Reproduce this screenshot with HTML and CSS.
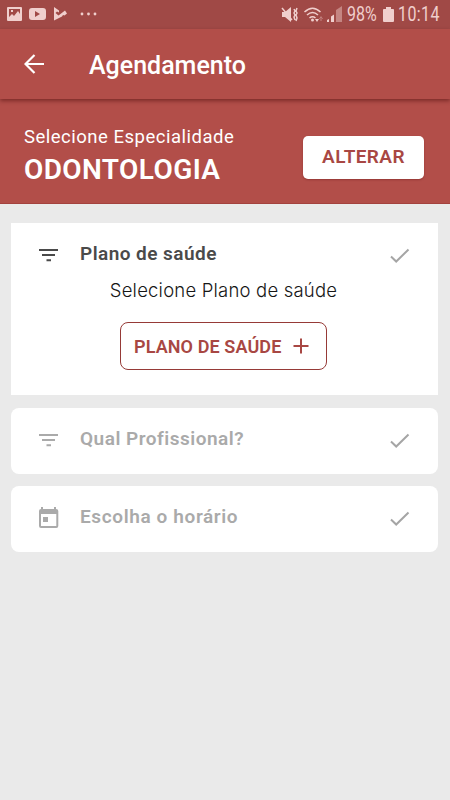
FILE: index.html
```html
<!DOCTYPE html>
<html lang="pt-BR">
<head>
  <meta charset="UTF-8" />
  <meta name="viewport" content="width=device-width, initial-scale=1" />
  <title>Agendamento</title>
  <link rel="stylesheet" href="styles.css">
</head>
<body>
  <div class="statusbar">
    <svg class="notifications" width="100" height="28" viewBox="0 0 100 28">
      <path fill-rule="evenodd" d="M8 7h13q1 0 1 1v12q0 1-1 1H8q-1 0-1-1V8q0-1 1-1zM9 9v8l3-3 2 2 4-5 2 3V9zM11 10h2v2h-2z"/>
      <path fill-rule="evenodd" d="M32 8h11q3 0 3 3v6q0 3-3 3H32q-3 0-3-3v-6q0-3 3-3zM35 11v6l5-3z"/>
      <path d="M54 7l5 3.500v2l-2-1-1.500 1.500 3 2.500 6.500-5 2 3-2.500 2-1.500-.5-1 1.500-8 4z"/>
      <circle cx="82" cy="14" r="1.400"/>
      <circle cx="88.500" cy="14" r="1.400"/>
      <circle cx="95" cy="14" r="1.400"/>
    </svg>
    <div class="system">
      <svg width="62" height="28" viewBox="281 0 62 28">
        <path d="M282 11h3l6-5v15l-6-5h-3z"/>
        <path class="line" d="M282 7l10 12M294 8l1 2-1 2 1 2-1 2 1 3M297 7l-1 3 1 2-1 2 1 3-1 3"/>
        <path class="line" d="M304.500 11q8-7.500 16 0M307 14q5.500-5 11 0M309.500 17q3-2.500 6 0"/>
        <circle cx="312.500" cy="19" r="1.500"/>
        <path d="M315 18h4l-2 3z"/>
        <path class="dim" d="M319 18h4l-2-3zM320.500 17h1v3h-1zM336 9l6-4v16h-6z"/>
        <path d="M327 21v-2l2-1v3h-2zM331 15.500l3-2V21h-3z"/>
      </svg>
      <span class="percent">98%</span>
      <svg class="battery" width="11" height="15" viewBox="0 0 11 16" preserveAspectRatio="none">
        <path d="M3 0h5v2h2q1 0 1 1v12q0 1-1 1H1q-1 0-1-1V3q0-1 1-1h2z"/>
      </svg>
      <span class="clock">10:14</span>
    </div>
  </div>

  <header class="toolbar">
    <svg class="back" width="20" height="20" viewBox="0 0 20 20">
      <path d="M20 10H2M10.500 1L1.500 10l9 9"/>
    </svg>
    <h1>Agendamento</h1>
  </header>

  <section class="specialty">
    <div>
      <p class="specialty-label">Selecione Especialidade</p>
      <p class="specialty-name">ODONTOLOGIA</p>
    </div>
    <button class="change-btn">ALTERAR</button>
  </section>

  <main>
    <section class="step active">
      <div class="step-head">
        <svg class="icon" width="24" height="24" viewBox="0 0 24 24">
          <path d="M2 6h19v2H2zM5 11h13v2H5zM9.500 16.300h4.500v2H9.500z"/>
        </svg>
        <h2 class="title-plan">Plano de saúde</h2>
        <svg class="check" width="20" height="16" viewBox="0 0 20 16"><path d="M1 8.500l5.200 5L18.500 1.500"/></svg>
      </div>
      <p class="step-text">Selecione Plano de saúde</p>
      <button class="plan-btn">
        <span>PLANO DE SAÚDE</span>
        <svg width="16" height="16" viewBox="0 0 16 16"><path d="M8 .5v15M.5 8h15"/></svg>
      </button>
    </section>

    <section class="step">
      <div class="step-head">
        <svg class="icon" width="24" height="24" viewBox="0 0 24 24">
          <path d="M2 6h19v2H2zM5 11h13v2H5zM9.500 16.300h4.500v2H9.500z"/>
        </svg>
        <h2 class="title-pro">Qual Profissional?</h2>
        <svg class="check" width="20" height="16" viewBox="0 0 20 16"><path d="M1 8.500l5.200 5L18.500 1.500"/></svg>
      </div>
    </section>

    <section class="step">
      <div class="step-head">
        <svg class="icon" width="24" height="24" viewBox="0 0 24 24">
          <path fill-rule="evenodd" d="M4 3V1h2v2h11V1h2v2q2.300 0 2.300 2v15q0 2-2 2H4q-2 0-2-2V5q0-2 2-2zM4 8v12h15.300V8zM6 11h5v5H6z"/>
        </svg>
        <h2 class="title-time">Escolha o horário</h2>
        <svg class="check" width="20" height="16" viewBox="0 0 20 16"><path d="M1 8.500l5.200 5L18.500 1.500"/></svg>
      </div>
    </section>
  </main>
</body>
</html>
```
FILE: styles.css
```css
* {
  box-sizing: border-box;
}

body {
  margin: 0;
  min-height: 100vh;
  background: #eaeaea;
  font-family: Roboto, sans-serif;
}

h1, h2, p {
  margin: 0;
  white-space: nowrap;
}

svg {
  display: block;
  flex: none;
}

button {
  font-family: inherit;
  cursor: pointer;
}

.statusbar {
  height: 29px;
  padding-right: 10px;
  display: flex;
  justify-content: space-between;
  background: #a04946;
  color: #f0cfcd;
  fill: #f0cfcd;
}

.system {
  display: flex;
  align-items: center;
  font-size: 19.5px;
  line-height: 28px;
}

.line {
  fill: none;
  stroke: #f0cfcd;
  stroke-width: 1.5;
}

.dim {
  opacity: 0.45;
}

.percent,
.clock {
  transform: scaleX(0.82);
  transform-origin: left;
}

.percent {
  width: 32px;
  margin-left: 4px;
}

.battery {
  margin: 0 4px;
}

.clock {
  width: 42px;
  letter-spacing: 0.5px;
}

.toolbar {
  position: relative;
  height: 70px;
  padding: 0 24px;
  display: flex;
  align-items: center;
  gap: 45px;
  background: #b24e49;
  box-shadow: 0 2px 4px rgba(60, 0, 0, 0.45);
  color: #fff;
}

.back {
  fill: none;
  stroke: #fff;
  stroke-width: 2.2;
}

.toolbar h1 {
  font-size: 25px;
  font-weight: 500;
  line-height: 30px;
  margin-top: 4px;
}

.specialty {
  height: 105px;
  padding: 11px 26px 0 24px;
  display: flex;
  justify-content: space-between;
  align-items: center;
  background: #b24e49;
  border-bottom: 1px solid #a3423e;
  color: #fff;
}

.specialty-label {
  margin-top: -2px;
  font-size: 18.5px;
  line-height: 24px;
  letter-spacing: 0.5px;
}

.specialty-name {
  margin-top: 4px;
  font-size: 28px;
  font-weight: 600;
  line-height: 34px;
  letter-spacing: 0.4px;
}

.change-btn {
  width: 121px;
  height: 43px;
  margin-top: 2px;
  padding: 0 0 2px;
  border: 0;
  border-radius: 5px;
  background: #fff;
  box-shadow: 0 1px 2px rgba(80, 0, 0, 0.3);
  color: #a84743;
  font-size: 19px;
  font-weight: 600;
  letter-spacing: 0.4px;
}

main {
  padding: 19px 12px 0 11px;
  display: flex;
  flex-direction: column;
  gap: 12px;
}

.step {
  height: 66px;
  padding: 18px 28px 0 26px;
  border-radius: 8px;
  background: #fff;
  color: #aaa;
}

.step.active {
  height: 172px;
  margin-bottom: 1px;
  border-radius: 0;
  color: #4a4a4a;
}

.step-head {
  display: flex;
  align-items: center;
  height: 26px;
}

.icon {
  margin: 2px 19px 0 0;
  fill: currentColor;
}

.step h2 {
  font-size: 19px;
  font-weight: 600;
  line-height: 24px;
}

.title-plan {
  letter-spacing: 0.45px;
}

.step .title-pro {
  letter-spacing: 0.5px;
}

.title-time {
  letter-spacing: 0.62px;
}

.check {
  margin: 4px 0 0 auto;
  fill: none;
  stroke: #a5a5a5;
  stroke-width: 2;
}

.step-text {
  margin-top: 11px;
  color: #161616;
  font-family: Inter, sans-serif;
  font-size: 18.5px;
  font-weight: 300;
  line-height: 24px;
  letter-spacing: 0.2px;
  text-align: center;
}

.plan-btn {
  width: 207px;
  height: 48px;
  margin: 20px auto 0;
  padding: 0 17px 0 13px;
  display: flex;
  align-items: center;
  justify-content: space-between;
  border: 1.5px solid #963a37;
  border-radius: 8px;
  background: #fff;
  color: #a84743;
  font-size: 18px;
  font-weight: 600;
  letter-spacing: 0.1px;
  white-space: nowrap;
}

.plan-btn svg {
  stroke: #a84743;
  stroke-width: 2;
}
```
